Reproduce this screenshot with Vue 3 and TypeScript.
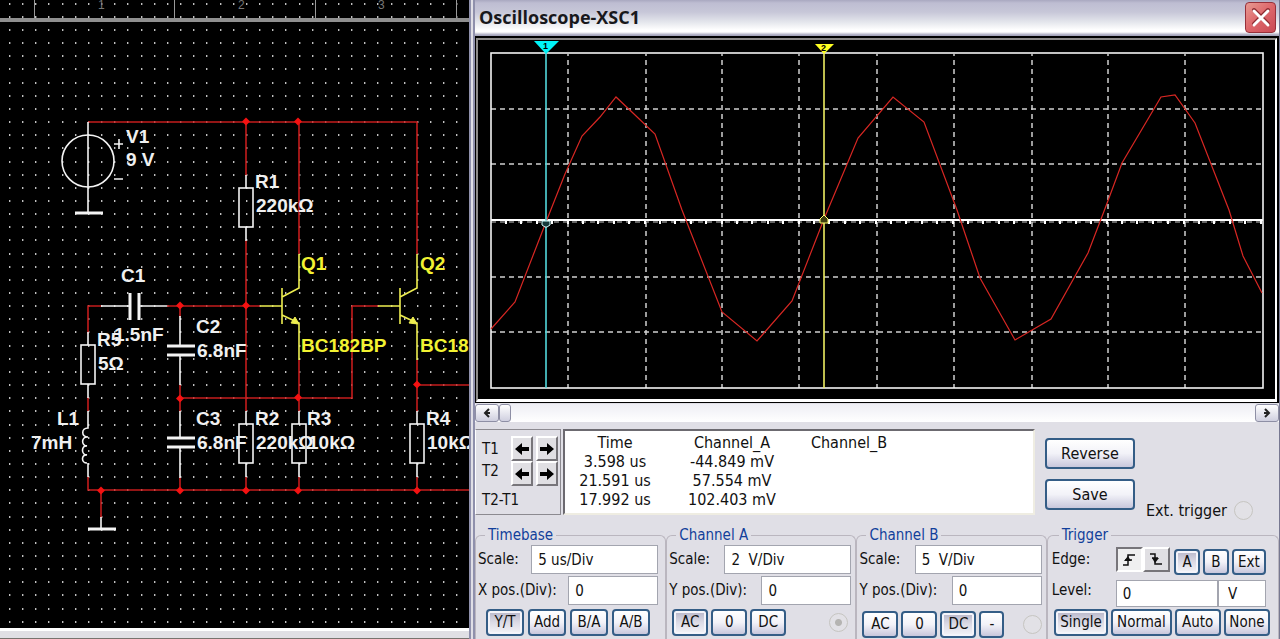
<script setup lang="ts">
import { ref } from 'vue'

interface Label { x: number; y: number; text: string; yellow?: boolean }
interface Reading { name: string; time: string; a: string; b: string }

const range = (n: number): number[] => Array.from({ length: n }, (_, i) => i)

const gridDots = range(46)
  .map(r => range(35).map(c => `M${Math.round(9 + 13.16 * c)} ${Math.round(30 + 13.15 * r)}h1.4`).join(''))
  .join('')
const marginDots = [4, 17].map(y => range(35).map(c => `M${Math.round(9 + 13.16 * c)} ${y}h1.4`).join('')).join('')

const labels: Label[] = [
  { x: 126, y: 143, text: 'V1' },
  { x: 126, y: 166, text: '9 V' },
  { x: 255, y: 188, text: 'R1' },
  { x: 256, y: 212, text: '220kΩ' },
  { x: 301, y: 270, text: 'Q1', yellow: true },
  { x: 420, y: 270, text: 'Q2', yellow: true },
  { x: 301, y: 352, text: 'BC182BP', yellow: true },
  { x: 420, y: 352, text: 'BC182BP', yellow: true },
  { x: 121, y: 282, text: 'C1' },
  { x: 114, y: 341, text: '1.5nF' },
  { x: 97, y: 346, text: 'R5' },
  { x: 98, y: 370, text: '5Ω' },
  { x: 196, y: 333, text: 'C2' },
  { x: 197, y: 357, text: '6.8nF' },
  { x: 196, y: 425, text: 'C3' },
  { x: 197, y: 449, text: '6.8nF' },
  { x: 57, y: 425, text: 'L1' },
  { x: 31, y: 449, text: '7mH' },
  { x: 255, y: 425, text: 'R2' },
  { x: 256, y: 449, text: '220kΩ' },
  { x: 307, y: 425, text: 'R3' },
  { x: 308, y: 449, text: '10kΩ' },
  { x: 426, y: 425, text: 'R4' },
  { x: 427, y: 449, text: '10kΩ' },
]

const nodes: [number, number][] = [
  [246, 121], [298, 121], [180, 305], [246, 305], [180, 398], [298, 397], [417, 384],
  [101, 490], [180, 490], [246, 490], [298, 490], [417, 490],
]
const resistors: [number, number][] = [[246, 188], [246, 424], [299, 424], [417, 424], [88, 345]]
const transistors = [0, 118]

const gridX = [568, 646, 722, 799, 877, 954, 1032, 1108, 1185]
const gridY = [109, 164, 277, 332]
const ticks = range(50).map(i => `M${506 + Math.round(i * 15.4)} 221v3`).join('')
const trace =
  '491,329 515,302 546,222 565,174 582,136 600,117 616,97 634,114 655,134 682,210 722,312 757,341 792,301 824,219 ' +
  '858,138 893,97 924,122 957,210 980,278 1015,340 1051,319 1088,253 1106,206 1122,163 1161,97 1175,95 1195,123 1229,210 1243,256 1262,293'

const readings: Reading[] = [
  { name: 'T1', time: '3.598 us', a: '-44.849 mV', b: '' },
  { name: 'T2', time: '21.591 us', a: '57.554 mV', b: '' },
  { name: 'T2-T1', time: '17.992 us', a: '102.403 mV', b: '' },
]

const timeScale = ref('5 us/Div')
const timePos = ref('0')
const aScale = ref('2  V/Div')
const aPos = ref('0')
const bScale = ref('5  V/Div')
const bPos = ref('0')
const level = ref('0')
const levelUnit = ref('V')

const display = ref('Y/T')
const aMode = ref('AC')
const bMode = ref('DC')
const edge = ref('rising')
const source = ref('A')
const trigger = ref('Single')
const input = ref('a')
</script>

<template>
  <main class="desk">
    <section class="schematic" aria-label="Schematic">
      <svg class="sheet" viewBox="0 0 469 627">
        <path :d="marginDots + gridDots" class="dots" />
        <path d="M34.5 0V18M174.5 0V18M315.5 0V18M456.5 0V18" class="ruler" />
        <text x="98" y="9" class="zone">1</text>
        <text x="238" y="9" class="zone">2</text>
        <text x="378" y="9" class="zone">3</text>
        <rect x="0" y="18" width="469" height="4" fill="#8f8f8f" />

        <path
          class="wire"
          d="M88 122H417V254M246 122V176M246 240V411M299 122V254M88 334V306H101M167 306H260M352 398V306H379M180 398H353
             M180 306V317M180 385V412M180 477V490M299 360V412M417 360V412M417 385H469M88 397V411M88 477V490H469
             M246 477V490M299 477V490M417 477V490M101 490V518"
        />
        <g class="part">
          <circle cx="88" cy="161" r="26" />
          <path d="M88 122V212M114 144H123M119 139V149M114 179H123" />
          <path d="M75 213H103M88 529H116" class="thick" />
          <path d="M101 517V528M101 306H130M139 306H167M180 316V346M180 356V385M180 411V438M180 448V478" />
          <path d="M130 293V320M139 293V320M167 346H195M167 355H195M167 438H195M167 447H195" class="thick" />
          <g v-for="([x, y], i) in resistors" :key="i">
            <rect :x="x - 7" :y="y" width="14" height="39" />
            <path :d="`M${x} ${y - 13}V${y}M${x} ${y + 39}V${y + 53}`" />
          </g>
          <path d="M88 411V428C81 428 81 437 88 437C81 436 81 446 87 446C81 445 81 455 87 455C81 454 81 463 87 463M88 463V477" />
        </g>
        <g v-for="dx in transistors" :key="dx" class="device">
          <path :d="`M${299 + dx} 254V288L${282 + dx} 297M${282 + dx} 288V324M${260 + dx} 306H${282 + dx}M${282 + dx} 315L${299 + dx} 323V360`" />
          <path :d="`M${295 + dx} 317L${299 + dx} 324L${291 + dx} 323Z`" class="arrowhead" />
        </g>
        <path v-for="([x, y], i) in nodes" :key="`n${i}`" :d="`M${x - 4} ${y + 0.5}l4 -4l4 4l-4 4z`" fill="#f51111" />
        <text v-for="(l, i) in labels" :key="`t${i}`" :x="l.x" :y="l.y" class="tag" :class="{ yellow: l.yellow }">{{ l.text }}</text>
      </svg>
      <div class="sheet-edge"></div>
    </section>

    <section class="scope" aria-label="Oscilloscope">
      <header class="title">
        <h1>Oscilloscope-XSC1</h1>
        <button type="button" class="close" aria-label="Close">
          <svg viewBox="0 0 30 30" width="30" height="30">
            <path d="M8 7L22 21M22 7L8 21" stroke="#8c2a30" stroke-width="4" stroke-linecap="round" />
            <path d="M8 8L22 22M22 8L8 22" stroke="#fff" stroke-width="3" stroke-linecap="round" />
          </svg>
        </button>
      </header>

      <div class="screen">
        <svg class="plot" viewBox="478 40 797 359">
          <g class="grid">
            <path v-for="x in gridX" :key="x" :d="`M${x} 54V388`" stroke-dashoffset="3" />
            <path v-for="y in gridY" :key="y" :d="`M491 ${y}H1263`" />
          </g>
          <path d="M491 222H1263" class="subaxis" />
          <path :d="ticks" class="tick" />
          <path d="M491 220H1263" class="axis" />
          <rect x="491" y="53" width="772" height="335" class="frame" />
          <polyline :points="trace" class="trace" />
          <path d="M546 53V388" stroke="#52d8dc" stroke-width="1.6" />
          <path d="M824 53V388" stroke="#eeee62" stroke-width="1.6" />
          <path d="M534 41H559L546 54Z" fill="#00f4f8" />
          <path d="M815 44H834L824 54Z" fill="#ffff22" />
          <text x="543" y="49" class="cursor-no">1</text>
          <text x="821" y="51" class="cursor-no">2</text>
          <path d="M542 221H550V225L547 227H545L542 225Z" fill="#173b3c" stroke="#d8ffff" />
          <path d="M824 215L828 219V223H820V219Z" fill="#3d3d10" stroke="#ffff70" />
        </svg>
      </div>

      <div class="scrollbar">
        <button type="button" class="scroll-btn" aria-label="Scroll left">
          <svg viewBox="0 0 12 12" width="12" height="12"><path d="M8 2L4 6L8 10M4 6H9" /></svg>
        </button>
        <button type="button" class="thumb" aria-label="Scroll position"></button>
        <span class="track"></span>
        <button type="button" class="scroll-btn" aria-label="Scroll right">
          <svg viewBox="0 0 12 12" width="12" height="12"><path d="M4 2L8 6L4 10M3 6H8" /></svg>
        </button>
      </div>

      <div class="readout">
        <div class="cursors">
          <div class="names"><span>T1</span><span>T2</span></div>
          <div class="steppers">
            <template v-for="t in ['T1', 'T2']" :key="t">
              <button type="button" class="bevel" :aria-label="`${t} left`">
                <svg viewBox="0 0 14 14" width="14" height="14"><path d="M0 7L7 1V5H14V9H7V13Z" /></svg>
              </button>
              <button type="button" class="bevel" :aria-label="`${t} right`">
                <svg viewBox="0 0 14 14" width="14" height="14"><path d="M14 7L7 1V5H0V9H7V13Z" /></svg>
              </button>
            </template>
          </div>
          <span class="delta">T2-T1</span>
        </div>
        <div class="values">
          <table>
            <thead><tr><th>Time</th><th>Channel_A</th><th>Channel_B</th></tr></thead>
            <tbody>
              <tr v-for="r in readings" :key="r.name"><td>{{ r.time }}</td><td>{{ r.a }}</td><td>{{ r.b }}</td></tr>
            </tbody>
          </table>
        </div>
        <div class="actions">
          <button type="button" class="xp">Reverse</button>
          <button type="button" class="xp">Save</button>
        </div>
        <label class="ext">Ext. trigger <input v-model="input" type="radio" name="input" value="ext" /></label>
      </div>

      <div class="groups">
        <fieldset>
          <legend>Timebase</legend>
          <div class="line"><label for="ts">Scale:</label><input id="ts" v-model="timeScale" type="text" class="long" /></div>
          <div class="line"><label for="tp">X pos.(Div):</label><input id="tp" v-model="timePos" type="text" class="short" /></div>
          <div class="buttons time">
            <button v-for="m in ['Y/T', 'Add', 'B/A', 'A/B']" :key="m" type="button" class="xp" :class="{ on: display === m }" @click="display = m">{{ m }}</button>
          </div>
        </fieldset>
        <fieldset class="channel">
          <legend>Channel A</legend>
          <div class="line"><label for="as">Scale:</label><input id="as" v-model="aScale" type="text" class="long" /></div>
          <div class="line"><label for="ap">Y pos.(Div):</label><input id="ap" v-model="aPos" type="text" class="short" /></div>
          <div class="buttons">
            <button v-for="m in ['AC', '0', 'DC']" :key="m" type="button" class="xp" :class="{ on: aMode === m }" @click="aMode = m">{{ m }}</button>
            <input v-model="input" type="radio" name="input" value="a" aria-label="Channel A input" />
          </div>
        </fieldset>
        <fieldset class="channel">
          <legend>Channel B</legend>
          <div class="line"><label for="bs">Scale:</label><input id="bs" v-model="bScale" type="text" class="long" /></div>
          <div class="line"><label for="bp">Y pos.(Div):</label><input id="bp" v-model="bPos" type="text" class="short" /></div>
          <div class="buttons lower">
            <button v-for="m in ['AC', '0', 'DC', '-']" :key="m" type="button" class="xp" :class="{ on: bMode === m, slim: m === '-' }" @click="bMode = m">{{ m }}</button>
            <input v-model="input" type="radio" name="input" value="b" aria-label="Channel B input" />
          </div>
        </fieldset>
        <fieldset class="trigger">
          <legend>Trigger</legend>
          <div class="line">
            <span class="name">Edge:</span>
            <div class="edges">
              <button type="button" class="bevel" :class="{ sunk: edge === 'rising' }" aria-label="Rising edge" @click="edge = 'rising'">
                <svg viewBox="0 0 16 16" width="16" height="16"><path d="M2 13H7V3H14M4 8H11" /><path d="M3 9L7 4L10 9Z" class="tip" /></svg>
              </button>
              <button type="button" class="bevel" :class="{ sunk: edge === 'falling' }" aria-label="Falling edge" @click="edge = 'falling'">
                <svg viewBox="0 0 16 16" width="16" height="16"><path d="M2 2H7V12H14M4 6H10" /><path d="M4 6L11 6L7 11Z" class="tip" /></svg>
              </button>
            </div>
            <div class="sources">
              <button v-for="s in ['A', 'B', 'Ext']" :key="s" type="button" class="xp" :class="{ on: source === s }" @click="source = s">{{ s }}</button>
            </div>
          </div>
          <div class="line level">
            <label for="lv" class="name">Level:</label>
            <input id="lv" v-model="level" type="text" class="amount" />
            <input v-model="levelUnit" type="text" class="unit" aria-label="Level unit" />
          </div>
          <div class="buttons modes">
            <button v-for="m in ['Single', 'Normal', 'Auto', 'None']" :key="m" type="button" class="xp" :class="{ on: trigger === m }" @click="trigger = m">{{ m }}</button>
          </div>
        </fieldset>
      </div>
    </section>
  </main>
</template>

<style>
body { margin: 0; background: #e0dfe6; }
</style>

<style scoped>
* { box-sizing: border-box; }
.desk {
  display: grid;
  grid-template-columns: minmax(0, 469fr) minmax(0, 811fr);
  min-height: 100vh;
  font: 15px/19px "DejaVu Sans Condensed", Tahoma, "DejaVu Sans", sans-serif;
  color: #111;
}
button, input { font: inherit; color: inherit; margin: 0; padding: 0; }
svg { display: block; fill: none; }

.schematic { display: flex; flex-direction: column; background: #000; }
.sheet { width: 100%; height: auto; }
.sheet-edge { height: 12px; margin-top: auto; background: #e0dfe4; border-top: 3px solid #fff; border-bottom: 2px solid #77736e; }
.dots { stroke: #fff; stroke-width: 1.4; }
.ruler { stroke: #999; stroke-width: 1; }
.zone { font: 12px "Liberation Sans", Arial, sans-serif; fill: #777; }
.wire { stroke: #c41c1c; stroke-width: 1.6; }
.part { stroke: #f4f4f4; stroke-width: 1.6; }
.thick { stroke-width: 3; }
.device { stroke: #eeee50; stroke-width: 1.6; }
.arrowhead { fill: #eeee50; stroke-width: 1; }
.tag { font: bold 19px "Liberation Sans", Arial, sans-serif; fill: #f0f0f0; }
.tag.yellow { fill: #f2f232; }

.scope {
  display: flex;
  flex-direction: column;
  min-width: 0;
  background: #e0dfe6;
  border-left: 6px double #8f90ac;
  border-right: 1px solid #777891;
}
.title {
  display: flex;
  align-items: center;
  justify-content: space-between;
  height: 36px;
  padding: 0 3px 2px 4px;
  background: linear-gradient(#a9a8c0 0, #bebdd2 3px, #c7c7d8 12px, #e4e6ec 22px, #fff 30px, #fff 32px, #a5a5bb 35px);
}
.title h1 { margin: 0; font: bold 18px/30px "Open Sans", "Noto Sans", sans-serif; color: #18181c; }
.close {
  width: 31px;
  height: 31px;
  border: 1px solid #96303a;
  border-radius: 4px;
  background: linear-gradient(135deg, #e79a92, #dd666a 50%, #c94a55);
}

.screen { padding: 2px 2px 1px 1px; background: #000; }
.plot {
  width: 100%;
  height: auto;
  background: #000;
  border: 2px solid #8d8b89;
  border-right-color: #fff;
  border-bottom: 3px solid #fff;
}
.grid { stroke: #d0d0d0; stroke-width: 1.5; stroke-dasharray: 5 4; }
.frame { stroke: #f4f4f4; stroke-width: 1.6; }
.axis { stroke: #fff; stroke-width: 2; }
.subaxis { stroke: #ccc; stroke-width: 1; stroke-dasharray: 5 4; }
.tick { stroke: #fff; stroke-width: 2; }
.trace { stroke: #d82723; stroke-width: 1.2; }
.cursor-no { font: bold 9px "Liberation Sans", sans-serif; fill: #000; }

.scrollbar { display: flex; height: 18px; margin: 1px 0 7px; background: linear-gradient(#eeeef4, #fff); }
.scroll-btn, .thumb { border: 1px solid #8e8fa5; border-radius: 3px; background: linear-gradient(#fff, #cfcfdf); }
.scroll-btn { display: grid; place-items: center; width: 24px; }
.scroll-btn path { stroke: #222; stroke-width: 2; }
.thumb { width: 12px; }
.track { flex: 1; }

.readout { display: flex; height: 86px; }
.cursors {
  display: grid;
  grid-template-columns: 1fr auto;
  align-content: start;
  width: 86px;
  padding: 6px 2px 0 6px;
  border: 1px solid #fff;
  border-top-color: #8c8a90;
  border-right-color: #8c8a90;
  border-bottom-color: #8c8a90;
}
.names { display: grid; grid-template-rows: 22px 22px; align-content: start; padding-top: 4px; }
.steppers { display: grid; grid-template-columns: 22px 22px; grid-auto-rows: 25px; column-gap: 3px; }
.delta { grid-column: 1 / -1; margin-top: 5px; }
.bevel {
  display: grid;
  place-items: center;
  border: 2px solid #fff;
  border-right-color: #77757a;
  border-bottom-color: #77757a;
  background: #e0dfe3;
}
.steppers path { fill: #000; }
.values {
  flex: 0 1 472px;
  margin-left: 2px;
  padding-top: 2px;
  background: #fff;
  border: 2px solid #6c6a70;
  border-right-color: #efede2;
  border-bottom-color: #efede2;
}
table { border-collapse: collapse; table-layout: fixed; width: 334px; }
.values, .actions, .ext { font-size: 16px; }
th, td { padding: 0; height: 19px; font-weight: normal; text-align: center; white-space: nowrap; }
th:nth-child(2) { width: 134px; }
.actions { display: flex; flex-direction: column; gap: 10px; width: 90px; margin: 9px 0 0 10px; }
.actions .xp { height: 31px; }
.ext {
  display: flex;
  align-items: center;
  align-self: flex-end;
  gap: 7px;
  height: 22px;
  margin: 0 26px -6px auto;
  white-space: nowrap;
}

.xp {
  padding: 0;
  border: 2px solid #345d86;
  border-radius: 4px;
  background: linear-gradient(#fff, #f2f2f8 50%, #c8c7dc);
  white-space: nowrap;
}
.xp.on { background: linear-gradient(#b6b5c8, #dcdbe6 50%, #f4f4f8); box-shadow: inset 0 0 0 2px #f4f4fa; }

input[type="radio"] {
  appearance: none;
  width: 19px;
  height: 19px;
  flex: none;
  border: 1px solid #c6c5c1;
  border-radius: 50%;
  background: #e2e1e6;
}
input[type="radio"]:checked { background: radial-gradient(circle, #b5b4b2 0 3px, #e2e1e6 4px); }
input[type="text"] {
  width: 40px;
  min-width: 0;
  height: 29px;
  padding: 0 0 0 6px;
  border: 1px solid #a3a5af;
  border-radius: 0;
  background: #fff;
  white-space: pre;
}

.groups {
  display: grid;
  grid-template-columns: minmax(0, 191fr) minmax(0, 190fr) minmax(0, 190fr) minmax(0, 232fr);
  flex: 1;
  margin-top: 11px;
}
fieldset {
  min-width: 0;
  margin: 0;
  padding: 0 7px 2px 2px;
  border: 1px solid #bab6bf;
  border-bottom: 0;
  border-radius: 6px 6px 0 0;
}
.channel { padding-right: 4px; }
legend { margin-left: 7px; padding: 0 3px; line-height: 18px; color: #123f9b; }
.line { display: flex; align-items: center; justify-content: space-between; height: 31px; white-space: nowrap; }
.long { flex: 0 0 127px; }
.short { flex: 0 0 90px; }
.buttons { display: flex; align-items: center; gap: 3px; padding-left: 3px; margin-top: 3px; }
.buttons .xp { width: 36px; height: 27px; }
.buttons.time { gap: 4px; padding-left: 8px; }
.buttons.time .xp { width: 38px; }
.buttons input { margin-left: auto; margin-right: 3px; }
.buttons.lower { margin-top: 5px; }
.lower input { margin-right: 0; }
.buttons .slim { width: 25px; }
.trigger { padding-left: 4px; padding-right: 12px; }
.trigger .name { width: 64px; flex: none; }
.trigger .line { justify-content: flex-start; }
.edges { display: flex; }
.edges .bevel { width: 27px; height: 25px; }
.edges path { stroke: #111; stroke-width: 1.5; }
.edges .tip { fill: #111; stroke: none; }
.edges .sunk { border-color: #77757a #fff #fff #77757a; background: #efeff0; }
.sources { display: flex; gap: 3px; margin-left: auto; padding-top: 5px; }
.sources .xp { width: 26px; height: 26px; }
.sources .xp:last-child { width: 34px; }
.trigger .amount { flex: 1; height: 27px; margin-top: 6px; }
.trigger .unit { flex: 0 0 48px; height: 27px; margin-top: 6px; padding-left: 9px; }
.modes { gap: 3px; padding-left: 2px; margin-right: -4px; }
.modes .xp { width: auto; flex: 45 1 0; }
.modes .xp:nth-child(1) { flex-grow: 54; }
.modes .xp:nth-child(2) { flex-grow: 60; }
</style>
